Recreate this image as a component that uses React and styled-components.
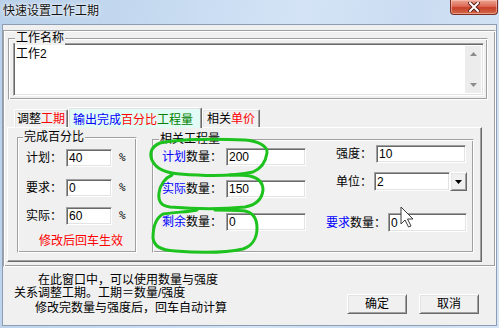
import React from "react";
import styled, { createGlobalStyle } from "styled-components";

const FONT = `"Liberation Sans", "Noto Sans CJK SC", sans-serif`;

const GlobalStyle = createGlobalStyle`
  html, body { margin: 0; padding: 0; background: #ffffff; }
  body { font-family: ${FONT}; font-size: 12px; }
  *, *::before, *::after { box-sizing: border-box; }
`;

const Window = styled.div`
  position: relative;
  width: 499px;
  height: 328px;
  display: flex;
  flex-direction: column;
  overflow: hidden;
  font-family: ${FONT};
  font-size: 12px;
  line-height: 14px;
  color: #000;
  background: linear-gradient(100deg, #b9d1ea 0%, #c6daf0 30%, #d4e4f6 55%, #cadcf1 75%, #d6e5f6 100%);
`;

const TitleBar = styled.div`
  height: 24px;
  flex: none;
  display: flex;
  align-items: flex-start;
`;

const Title = styled.div`
  margin: 4px 0 0 3px;
  line-height: 14px;
  color: #111;
  text-shadow: 0 0 5px rgba(255, 255, 255, 0.95), 0 0 2px #fff;
`;

const CloseButton = styled.div`
  margin-left: auto;
  margin-right: 1px;
  width: 48px;
  height: 15px;
  border: 1px solid #7a2f24;
  border-top: none;
  border-radius: 0 0 4px 4px;
  background: linear-gradient(#eba596 0%, #dd6a54 45%, #c7402a 55%, #d26a4a 100%);
  box-shadow: inset 0 0 0 1px rgba(255, 210, 200, 0.5);
  display: flex;
  align-items: center;
  justify-content: center;
`;

const Client = styled.div`
  flex: 1;
  margin: 0 2px 2px;
  border: 1px solid #8d9db3;
  background: #f0f0f0;
  display: flex;
  flex-direction: column;
`;

const etched = `
  border: 1px solid;
  border-color: #a0a0a0 #ffffff #ffffff #a0a0a0;
  box-shadow: inset 1px 1px #ffffff, inset -1px -1px #a0a0a0;
`;

const sunken = `
  border: 1px solid;
  border-color: #a0a0a0 #ffffff #ffffff #a0a0a0;
  box-shadow: inset 1px 1px #696969, inset -1px -1px #e3e3e3;
`;

const raised = `
  border: 1px solid;
  border-color: #ffffff #696969 #696969 #ffffff;
  box-shadow: inset 1px 1px #e3e3e3, inset -1px -1px #a0a0a0;
`;

const Frame = styled.div`
  ${etched};
  margin-top: 5px;
  height: 237px;
  padding: 7px 5px 0 4px;
  display: flex;
  flex-direction: column;
`;

const GroupBox = styled.div`
  ${etched};
  position: relative;
  flex: none;
  width: ${(p) => p.$w}px;
  height: ${(p) => p.$h}px;
  margin-top: ${(p) => p.$mt || 0}px;
  padding: ${(p) => p.$pad || "0"};
`;

const Legend = styled.span`
  position: absolute;
  top: -8px;
  left: ${(p) => p.$left}px;
  padding: 0 1px;
  background: #f0f0f0;
  line-height: 14px;
  white-space: nowrap;
`;

const EditArea = styled.div`
  ${sunken};
  background: #ffffff;
  height: 53px;
  display: flex;
  padding: 2px;
`;

const EditText = styled.div`
  flex: 1;
  padding: 1px 0 0 0;
  line-height: 14px;
`;

const ScrollBar = styled.div`
  width: 16px;
  background: #ececec;
  display: flex;
  flex-direction: column;
  justify-content: space-between;
  align-items: center;
  padding: 6px 0 6px;
`;

const TabStrip = styled.div`
  height: 27px;
  margin-left: -1px;
  padding-left: 7px;
  display: flex;
  align-items: flex-end;
  flex: none;
`;

const Tab = styled.div`
  width: ${(p) => p.$w}px;
  height: ${(p) => (p.$active ? 21 : 18)}px;
  margin-bottom: ${(p) => (p.$active ? -1 : 0)}px;
  position: relative;
  z-index: ${(p) => (p.$active ? 2 : 1)};
  background: ${(p) => (p.$active ? "#e2fcf5" : "#f0f0f0")};
  border-top: 1px solid #ffffff;
  border-left: 1px solid #ffffff;
  border-right: 1px solid #696969;
  box-shadow: inset -1px 0 #a0a0a0, inset 1px 1px #e3e3e3;
  border-radius: 2px 2px 0 0;
  display: flex;
  justify-content: ${(p) => (p.$active ? "flex-start" : "center")};
  padding-left: ${(p) => (p.$active ? 4 : 0)}px;
  padding-top: ${(p) => (p.$active ? 5 : 2)}px;
  line-height: 14px;
  white-space: nowrap;
`;

const C = styled.span`
  color: ${(p) => p.$c || "#000"};
`;

const TabPanel = styled.div`
  margin-left: -1px;
  width: 475px;
  height: 135px;
  border: 1px solid;
  border-color: #ffffff #696969 #696969 #ffffff;
  box-shadow: inset -1px -1px #a0a0a0;
  background: #f0f0f0;
  padding: 9px 0 0 9px;
  display: flex;
  align-items: flex-start;
  gap: 15px;
  position: relative;
  z-index: 1;
`;

const Row = styled.div`
  display: flex;
  align-items: center;
  height: ${(p) => p.$h || 18}px;
  margin-top: ${(p) => p.$mt || 0}px;
  margin-right: ${(p) => p.$mr || 0}px;
`;

const Label = styled.span`
  width: ${(p) => p.$w}px;
  white-space: nowrap;
  flex: none;
`;

const Input = styled.div`
  ${sunken};
  background: #ffffff;
  width: ${(p) => p.$w}px;
  height: ${(p) => p.$h || 18}px;
  margin-left: ${(p) => p.$gap}px;
  padding: 0 0 0 2px;
  display: flex;
  align-items: center;
  line-height: 14px;
  flex: none;
`;

const Percent = styled.span`
  margin-left: 7px;
  font-family: "DejaVu Sans Mono", monospace;
  font-size: 11px;
`;

const Hint = styled.div`
  margin-top: 9px;
  text-align: center;
  color: #ff0000;
  line-height: 14px;
`;

const Column = styled.div`
  display: flex;
  flex-direction: column;
  padding-top: ${(p) => p.$pt}px;
  padding-left: ${(p) => p.$pl || 0}px;
  align-items: ${(p) => (p.$end ? "flex-end" : "flex-start")};
  flex: ${(p) => (p.$grow ? 1 : "none")};
`;

const Split = styled.div`
  display: flex;
  height: 100%;
  padding-right: 6px;
`;

const DropButton = styled.div`
  ${raised};
  width: 17px;
  height: 19px;
  background: #f0f0f0;
  display: flex;
  align-items: center;
  justify-content: center;
  flex: none;
`;

const Footer = styled.div`
  flex: 1;
  display: flex;
  justify-content: space-between;
  padding: 7px 17px 0 0;
`;

const Notes = styled.div`
  display: flex;
  flex-direction: column;
`;

const NoteLine = styled.div`
  line-height: 13px;
  margin-left: ${(p) => p.$indent}px;
  margin-top: ${(p) => p.$mt || 0}px;
  white-space: nowrap;
`;

const Buttons = styled.div`
  display: flex;
  gap: 12px;
  margin-top: 20px;
`;

const Button = styled.div`
  ${raised};
  width: 60px;
  height: 20px;
  background: #f0f0f0;
  display: flex;
  align-items: center;
  justify-content: center;
  line-height: 14px;
`;

const Overlay = styled.svg`
  position: absolute;
  left: 0;
  top: 0;
  z-index: 10;
  pointer-events: none;
`;

const Arrow = ({ up }) => (
  <svg width="7" height="4" viewBox="0 0 7 4">
    <path d={up ? "M0 4 L3.5 0 L7 4 Z" : "M0 0 L3.5 4 L7 0 Z"} fill="#8c8c8c" />
  </svg>
);

export default function App() {
  return (
    <>
      <GlobalStyle />
      <Window>
        <TitleBar>
          <Title>快速设置工作工期</Title>
          <CloseButton>
            <svg width="12" height="10" viewBox="0 0 12 10">
              <path d="M2 1 L10 9 M10 1 L2 9" stroke="#5a2018" strokeWidth="4" strokeLinecap="square" />
              <path d="M2 1 L10 9 M10 1 L2 9" stroke="#ffffff" strokeWidth="2" strokeLinecap="square" />
            </svg>
          </CloseButton>
        </TitleBar>
        <Client>
          <Frame>
            <GroupBox $w={480} $h={62} $pad="4px 3px 1px 4px">
              <Legend $left={6}>工作名称</Legend>
              <EditArea>
                <EditText>工作2</EditText>
                <ScrollBar>
                  <Arrow up />
                  <Arrow />
                </ScrollBar>
              </EditArea>
            </GroupBox>
            <TabStrip>
              <Tab $w={54}>
                调整<C $c="#ff0000">工期</C>
              </Tab>
              <Tab $w={134} $active>
                <C $c="#0000ff">输出完成</C>
                <C $c="#ff0000">百分比</C>
                <C $c="#008000">工程量</C>
              </Tab>
              <Tab $w={58}>
                相关<C $c="#ff0000">单价</C>
              </Tab>
            </TabStrip>
            <TabPanel>
              <GroupBox $w={120} $h={116} $pad="11px 0 0 8px">
                <Legend $left={5}>完成百分比</Legend>
                <Row>
                  <Label $w={36}>计划：</Label>
                  <Input $w={46} $gap={4}>40</Input>
                  <Percent>%</Percent>
                </Row>
                <Row $mt={12}>
                  <Label $w={36}>要求：</Label>
                  <Input $w={46} $gap={4}>0</Input>
                  <Percent>%</Percent>
                </Row>
                <Row $mt={10}>
                  <Label $w={36}>实际：</Label>
                  <Input $w={46} $gap={4}>60</Input>
                  <Percent>%</Percent>
                </Row>
                <Hint>修改后回车生效</Hint>
              </GroupBox>
              <GroupBox $w={322} $h={114} $mt={2}>
                <Legend $left={6}>相关工程量</Legend>
                <Split>
                  <Column $pt={8} $pl={9}>
                    <Row>
                      <Label $w={60}>
                        <C $c="#0000ff">计划</C>数量：
                      </Label>
                      <Input $w={80} $gap={4}>200</Input>
                    </Row>
                    <Row $mt={14}>
                      <Label $w={60}>
                        <C $c="#0000ff">实际</C>数量：
                      </Label>
                      <Input $w={80} $gap={4}>150</Input>
                    </Row>
                    <Row $mt={15}>
                      <Label $w={60}>
                        <C $c="#0000ff">剩余</C>数量：
                      </Label>
                      <Input $w={80} $gap={4}>0</Input>
                    </Row>
                  </Column>
                  <Column $pt={5} $end $grow>
                    <Row $mr={1}>
                      <Label $w={36}>强度：</Label>
                      <Input $w={90} $gap={4}>10</Input>
                    </Row>
                    <Row $mt={9} $h={19}>
                      <Label $w={36}>单位：</Label>
                      <Input $w={76} $h={19} $gap={2}>2</Input>
                      <DropButton>
                        <svg width="7" height="4" viewBox="0 0 7 4">
                          <path d="M0 0 L7 0 L3.5 4 Z" fill="#000" />
                        </svg>
                      </DropButton>
                    </Row>
                    <Row $mt={22} $h={19}>
                      <Label $w={60}>
                        <C $c="#0000ff">要求</C>数量：
                      </Label>
                      <Input $w={79} $h={19} $gap={2}>0</Input>
                    </Row>
                  </Column>
                </Split>
              </GroupBox>
            </TabPanel>
          </Frame>
          <Footer>
            <Notes>
              <NoteLine $indent={35}>在此窗口中，可以使用数量与强度</NoteLine>
              <NoteLine $indent={11}>关系调整工期。工期＝数量/强度</NoteLine>
              <NoteLine $indent={32} $mt={2}>修改完数量与强度后，回车自动计算</NoteLine>
            </Notes>
            <Buttons>
              <Button>确定</Button>
              <Button>取消</Button>
            </Buttons>
          </Footer>
        </Client>
        <Overlay width="499" height="328" viewBox="0 0 499 328">
          <g fill="none" stroke="#1ec21e" strokeWidth="3" strokeLinecap="round" strokeLinejoin="round">
            <path d="M160 143 C185 138 220 139 245 140 C258 141 268 146 267 153 C266 160 262 168 253 172 C235 176 205 176 180 174 C165 173 157 169 153 162 C149 155 150 147 160 143" />
            <path d="M172 175 C165 178 160 185 159 193 C158 201 161 206 170 207 C195 209 225 209 245 207 C256 205 262 199 263 190 C263 183 259 178 250 176 C243 175 236 175 230 175" />
            <path d="M197 210 C190 212 175 212 163 214 C156 218 153 228 153 238 C154 246 160 250 175 251 C200 253 225 253 243 249 C252 246 257 238 257 228 C257 220 254 213 245 211 C238 210 225 210 215 210" />
          </g>
          <path
            d="M401 207 L401 224 L405 220 L408.5 227 L411 226 L407.5 219 L413 219 Z"
            fill="#ffffff"
            stroke="#3c3c3c"
            strokeWidth="1"
            strokeLinejoin="round"
          />
        </Overlay>
      </Window>
    </>
  );
}
